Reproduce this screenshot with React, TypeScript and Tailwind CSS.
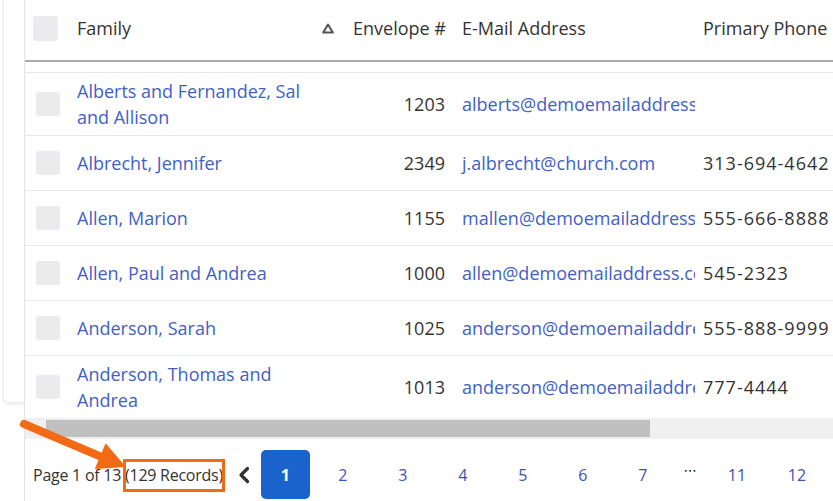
import React from 'react';

const rows = [
  { id: 1, name: 'Alberts and Fernandez, Sal and Allison', envelope: '1203', email: 'alberts@demoemailaddress.com', phone: '' },
  { id: 2, name: 'Albrecht, Jennifer', envelope: '2349', email: 'j.albrecht@church.com', phone: '313-694-4642' },
  { id: 3, name: 'Allen, Marion', envelope: '1155', email: 'mallen@demoemailaddress.com', phone: '555-666-8888' },
  { id: 4, name: 'Allen, Paul and Andrea', envelope: '1000', email: 'allen@demoemailaddress.com', phone: '545-2323' },
  { id: 5, name: 'Anderson, Sarah', envelope: '1025', email: 'anderson@demoemailaddress.com', phone: '555-888-9999' },
  { id: 6, name: 'Anderson, Thomas and Andrea', envelope: '1013', email: 'anderson@demoemailaddress.com', phone: '777-4444' },
];

const pages = ['2', '3', '4', '5', '6', '7'];

const cols = 'grid grid-cols-[43px_277px_109px_241px_220px]';

function Checkbox({ header }: { header?: boolean }) {
  return <div className={`${header ? 'w-[25px] h-[25px]' : 'w-[24px] h-[24px]'} rounded-[3px] bg-[#ebebed]`} />;
}

export default function App() {
  return (
    <div className="relative flex w-[833px] h-[501px] overflow-hidden bg-white font-['Open_Sans',sans-serif] text-[#333]">
      {/* sidebar card peeking out behind the table */}
      <div className="w-[24px] shrink-0">
        <div className="ml-[3px] h-[403px] border-l border-b border-[#ebebeb] rounded-bl-[6px] shadow-[0_2px_3px_rgba(0,0,0,0.07)]" />
      </div>

      <div className="flex-1 min-w-0 flex flex-col border-l border-[#e4e4e4] overflow-hidden">
        {/* header */}
        <div className={`${cols} h-[62px] items-center border-b-2 border-[#a9abad] text-[18px]`}>
          <div className="pl-[8px] pb-[3px]"><Checkbox header /></div>
          <div className="flex items-center justify-between pl-[9px] pr-[11px] pb-[3px]">
            <span>Family</span>
            <svg width="12" height="11" viewBox="0 0 12 11">
              <path d="M6 1.5 L10.8 9.6 H1.2 Z" fill="none" stroke="#555" strokeWidth="2" strokeLinejoin="round" />
            </svg>
          </div>
          <div className="pl-2 pb-[3px] whitespace-nowrap">Envelope #</div>
          <div className="pl-2 pb-[3px] whitespace-nowrap">E-Mail Address</div>
          <div className="pl-2 pb-[3px] whitespace-nowrap">Primary Phone</div>
        </div>
        <div className="h-[11px] border-b border-[#e8e8e8]" />

        {/* body */}
        {rows.map((r, i) => (
          <div
            key={r.id}
            className={`${cols} items-center text-[18px] leading-[26px] ${i === rows.length - 1 ? 'py-[5px] min-h-[62px]' : 'py-[5px] min-h-[55px] border-b border-[#e8e8e8]'}`}
          >
            <div className="pl-[11px]"><Checkbox /></div>
            <div className="pl-[9px] pr-[28px] text-[#3f5fc9]">{r.name}</div>
            <div className="pr-[9px] text-right">{r.envelope}</div>
            <div className="pl-2 overflow-hidden whitespace-nowrap text-[#3f5fc9]">{r.email}</div>
            <div className="pl-2 whitespace-nowrap tracking-[1px]">{r.phone}</div>
          </div>
        ))}

        {/* horizontal scrollbar */}
        <div className="flex items-center h-[21px] bg-[#f0f0f0] shrink-0">
          <div className="w-[21px] flex items-center justify-center">
            <svg width="6" height="8" viewBox="0 0 6 8"><path d="M5 0 L0 4 L5 8 Z" fill="#a3a3a3" /></svg>
          </div>
          <div className="w-[604px] h-[17px] bg-[#c0c0c0]" />
        </div>

        {/* pagination */}
        <div className="flex items-center pl-[8px] pt-[11px] text-[16px]">
          <span className="whitespace-nowrap tracking-[-0.25px]">Page 1 of 13 (129 Records)</span>
          <svg className="ml-[14px]" width="14" height="18" viewBox="0 0 14 18">
            <path d="M10.5 2.5 L4 9 L10.5 15.5" fill="none" stroke="#333" strokeWidth="3.2" strokeLinecap="round" strokeLinejoin="round" />
          </svg>
          <button className="ml-[10px] w-[49px] h-[49px] shrink-0 rounded-[5px] bg-[#1b63cc] text-white font-bold">1</button>
          <div className="ml-[3px] flex items-center text-[#3f51b5]">
            {pages.map((p) => (
              <span key={p} className="w-[60px] text-center">{p}</span>
            ))}
            <span className="w-[34px] text-center text-black font-['DejaVu_Sans',sans-serif] text-[13px] -mt-[8px]">⋯</span>
            <span className="w-[60px] text-center">11</span>
            <span className="w-[60px] text-center">12</span>
          </div>
        </div>
      </div>

      {/* annotation overlay: arrow and box */}
      <svg className="absolute inset-0 pointer-events-none" width="833" height="501" viewBox="0 0 833 501">
        <line x1="24" y1="424" x2="104" y2="458" stroke="#f26a14" strokeWidth="8" strokeLinecap="round" />
        <polygon points="126,467 94.8,469 105.6,443.2" fill="#f26a14" />
      </svg>
      <div className="absolute left-[123px] top-[459px] w-[102px] h-[33px] border-[3px] border-[#f26a14] pointer-events-none" />
    </div>
  );
}
